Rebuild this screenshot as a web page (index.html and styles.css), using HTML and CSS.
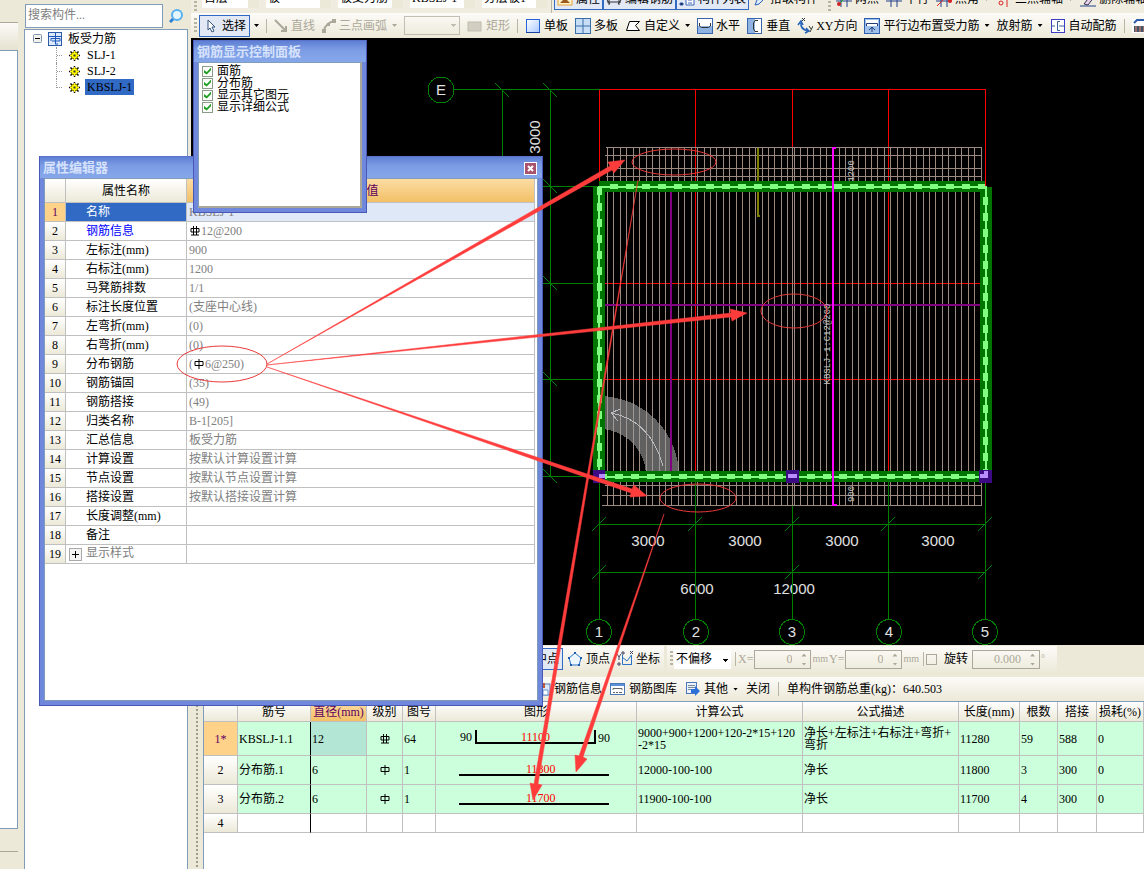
FILE: index.html
```html
<!DOCTYPE html>
<html lang="zh">
<head>
    <meta charset="UTF-8">
    <title>板受力筋</title>
    <meta name="viewport" content="width=device-width,initial-scale=1.0">
    <link rel="stylesheet" href="styles.css">
</head>
<body>
<svg class="symbols" width="0" height="0">
    <symbol id="grade1" viewBox="0 0 10 10">
        <path d="M5 0v10M1 2.5h8v4H1z" fill="none" stroke="#000"/>
    </symbol>
    <symbol id="grade3" viewBox="0 0 10 10">
        <path d="M3.5 0v9M6.5 0v9M1 2.5h8v3.5H1zM1 9h8" fill="none" stroke="#000"/>
    </symbol>
    <symbol id="gear" viewBox="0 0 11 11">
        <path d="M5.5 0v11M0 5.5h11M1.5 1.5l8 8M9.500 1.500l-8 8" stroke="#000" stroke-width="1.500"/>
        <circle cx="5.500" cy="5.500" r="3.500" fill="#ff0" stroke="#8a7a00"/>
        <path d="M5.5 1v9M1 5.500h9" stroke="#ff0"/>
        <rect x="4.500" y="4.500" width="2" height="2" fill="#333"/>
    </symbol>
    <symbol id="axis" viewBox="0 0 16 16">
        <path d="M0 4h16M0 10h16M5 0v16M11 0v16" stroke="#23408c" fill="none"/>
    </symbol>
</svg>
<div class="app">
    <aside class="side">
        <div class="side-head"></div>
        <div class="side-tab"></div>
        <div class="side-body"></div>
        <div class="side-foot"></div>
    </aside>
    <section class="tree-panel">
        <div class="search">
            <input type="text" class="search-input" placeholder="搜索构件..." aria-label="搜索构件">
            <button class="search-button" aria-label="搜索">
                <svg width="14" height="14" viewBox="0 0 14 14">
                    <path d="M5 9L1 13" stroke="#2f7fd0" stroke-width="3"/>
                    <circle cx="8" cy="6" r="5" fill="#e6f6ff" stroke="#58b0ee" stroke-width="2"/>
                </svg>
            </button>
        </div>
        <div class="tree">
            <div class="tree-root">
                <svg width="9" height="9" viewBox="0 0 9 9">
                    <rect x=".5" y=".5" width="8" height="8" rx="1" fill="#f3f2ea" stroke="#7b96b4"/>
                    <path d="M2 4.5h5" stroke="#000"/>
                </svg>
                <svg width="14" height="14" viewBox="0 0 14 14">
                    <rect x=".5" y=".5" width="13" height="13" fill="#dceafc" stroke="#2c5ba8"/>
                    <path d="M1 4.500h12M7.500 1v11M3 9V6.500h9V9H4M7 12h3" fill="none" stroke="#1d56b8"/>
                </svg>
                <span>板受力筋</span>
            </div>
            <ul class="tree-list">
                <li><svg width="11" height="11"><use href="#gear"/></svg><span>SLJ-1</span></li>
                <li><svg width="11" height="11"><use href="#gear"/></svg><span>SLJ-2</span></li>
                <li><svg width="11" height="11"><use href="#gear"/></svg><span class="selected">KBSLJ-1</span></li>
            </ul>
        </div>
    </section>
    <main class="main">
        <div class="bar bar-top">
            <i class="grip"></i>
            <select class="combo" aria-label="楼层"><option>首层</option></select>
            <select class="combo combo-wide" aria-label="类型"><option>板</option></select>
            <select class="combo combo-wide" aria-label="构件类型"><option>板受力筋</option></select>
            <select class="combo combo-wide" aria-label="构件"><option>KBSLJ-1</option></select>
            <select class="combo combo-wide" aria-label="分层"><option>分层板1</option></select>
            <i class="sep"></i>
            <div class="pressed-group">
                <button class="tool pressed">
                    <svg width="16" height="16"><rect x="1" y="1" width="14" height="13" fill="#fff3c8" stroke="#e8a23a"/><path d="M3 12l5-5 5 5z" fill="#9b5b20"/></svg>属性</button>
                <button class="tool pressed">
                    <svg width="16" height="16"><path d="M1 11h14M3 8v6M13 8v6M1 9l3 4M15 9l-3 4" stroke="#333"/></svg>编辑钢筋</button>
                <button class="tool pressed">
                    <svg width="16" height="16"><path d="M7 1h8v13H7z" fill="#fff" stroke="#3b64b8"/><path d="M9 6h4M9 9h4M9 12h4M1 8h3M1 12h3v2H1z" stroke="#3b64b8"/></svg>构件列表</button>
            </div>
            <button class="tool">
                <svg width="14" height="16"><path d="M2 14l2-5 7-7 3 3-8 8z" fill="#dcebff" stroke="#2c60c0"/></svg>拾取构件</button>
            <i class="grip"></i>
            <button class="tool"><svg width="16" height="16"><use href="#axis"/><path d="M2 14L13 3" stroke="#2b2"/><circle cx="3" cy="13" r="2" fill="#c22"/></svg>两点</button>
            <button class="tool"><svg width="16" height="16"><use href="#axis"/></svg>平行</button>
            <button class="tool"><svg width="16" height="16"><use href="#axis"/><path d="M1 15L14 2" stroke="#d22"/><circle cx="14" cy="10" r="2" fill="#d22"/></svg>点角<i class="arrow"></i></button>
            <button class="tool"><svg width="16" height="16"><path d="M11 0v16M5 0v9" stroke="#d22"/><circle cx="5" cy="12" r="2" fill="none" stroke="#d22"/></svg>三点辅轴<i class="arrow"></i></button>
            <button class="tool"><svg width="16" height="16"><path d="M0 15h16" stroke="#23408c"/><path d="M4 13l7-9 3 2-6 8z" fill="#e8d2ea" stroke="#335"/></svg>删除辅轴</button>
        </div>
        <div class="bar bar-draw">
            <i class="grip"></i>
            <button class="tool pressed select-tool">
                <svg width="12" height="16"><path d="M3 2v10l2-2 2 4 2-1-2-4h3z" fill="#fff" stroke="#33527c"/></svg>选择</button>
            <i class="arrow"></i>
            <i class="sep"></i>
            <button class="tool" disabled><svg width="14" height="16"><path d="M1 2l11 11M12 8v5H7" fill="none" stroke="#aca899" stroke-width="2"/></svg>直线</button>
            <button class="tool" disabled><svg width="14" height="16"><path d="M2 13C3 7 6 4 13 3" fill="none" stroke="#aca899" stroke-width="2"/><path d="M0 11h4v4H0zM5 5h3v3H5zM10 1h4v4h-4z" fill="#aca899"/></svg>三点画弧<i class="arrow"></i></button>
            <select class="combo-off" disabled aria-label="弧方向"></select>
            <button class="tool" disabled><svg width="16" height="16"><rect x="1" y="4" width="13" height="9" fill="#d2cfc2" stroke="#c0bdb0"/></svg>矩形</button>
            <i class="sep"></i>
            <button class="tool"><svg width="16" height="16"><defs><linearGradient id="slab" x2="1" y2="1"><stop stop-color="#fff"/><stop offset="1" stop-color="#a8c8ff"/></linearGradient></defs><rect x="1.500" y="1.500" width="13" height="13" fill="url(#slab)" stroke="#2a62d8"/><path d="M1 14.500h14" stroke="#1840a0"/></svg>单板</button>
            <button class="tool"><svg width="16" height="16"><rect x=".5" y=".5" width="15" height="15" fill="#c8def6" stroke="#3a6ea8"/><path d="M8 1v14M1 8h14" stroke="#3a6ea8"/></svg>多板</button>
            <button class="tool"><svg width="16" height="16"><path d="M4.500 3.500h10l-4 4 4 5H1.500z" fill="#fff" stroke="#000"/></svg>自定义<i class="arrow"></i></button>
            <button class="tool"><svg width="16" height="16"><rect x=".5" y=".5" width="15" height="15" fill="#8fb4e4" stroke="#3a66b0"/><rect x="1" y="1" width="14" height="7" fill="#fff"/><path d="M2.500 5v3l2 1.500h7l2-1.500V5" fill="none" stroke="#333"/></svg>水平</button>
            <button class="tool"><svg width="16" height="16"><rect x=".5" y=".5" width="14" height="15" fill="#8fb4e4" stroke="#3a66b0"/><rect x="8" y="1" width="6" height="14" fill="#fff"/><path d="M11 2.500H8L6.500 5v6L8 13.500h3" fill="none" stroke="#333"/></svg>垂直</button>
            <button class="tool"><svg width="16" height="16"><path d="M4 5q-1 6 7 8M1 7l3-4 2 4M9 10l3 3-4 2" fill="none" stroke="#2462b8" stroke-width="1.500"/><path d="M5 0l3 3M8 0L5 3M12 8l2 3M16 8l-3 6" stroke="#333"/></svg>XY方向</button>
            <button class="tool"><svg width="16" height="16"><rect x=".5" y=".5" width="15" height="15" fill="#9fc0ea" stroke="#2f5dae"/><rect x="2" y="2" width="12" height="6" fill="#fff"/><path d="M2.500 8V5.500h11V8M8 14V9M5 12l3-3 3 3" fill="none" stroke="#223c78"/></svg>平行边布置受力筋<i class="arrow"></i></button>
            <button class="tool">放射筋<i class="arrow"></i></button>
            <button class="tool"><svg width="16" height="16"><rect x="1.500" y="1.500" width="13" height="13" fill="#fff" stroke="#3c3cc8"/><path d="M10 3.500H7.500v9H10M1 8h4M9 8h5" fill="none" stroke="#3c60a0"/></svg>自动配筋</button>
            <i class="sep"></i>
            <button class="tool" aria-label="钢筋"><svg width="16" height="16"><rect y="1" width="16" height="14" fill="#fff"/><path d="M2 5l3-3h11" fill="none" stroke="#2f5dae" stroke-width="2"/><path d="M2 8h14v6H2z" fill="#456"/><path d="M4 8v6M8 8v6M12 8v6" stroke="#e87" /></svg></button>
        </div>
        <div class="canvas">
            <svg width="953" height="607" viewBox="191 38 953 607" shape-rendering="crispEdges">
                <!--轴线-->
                <g stroke="#f00" fill="none">
                    <path d="M599.5 89.500H985.500V186M599.500 90V186M695.500 90V476M792.500 90V148M888.500 90V476M600 283.500H985M600 379.500H985"/>
                </g>
                <g stroke="#008000" fill="none">
                    <path d="M454 89.500H600M502.500 90V476M550.500 90V476M502 186.500H600M502 283.500H600M502 379.500H600M502 476.500H600"/>
                    <path d="M495 83l14 14M543 83l14 14M543 179l14 14M543 276l14 14M543 372l14 14M543 469l14 14"/>
                    <path d="M599 524.500H985M599 572.500H985"/>
                    <path d="M592 531l14-14M688 531l14-14M785 531l14-14M881 531l14-14M978 531l14-14M592 579l14-14M785 579l14-14M978 579l14-14"/>
                </g>
                <!--负筋网-->
                <g stroke="#9c8a80" fill="none">
                    <path d="M607 326.500H982" stroke-width="359" stroke-dasharray="1 5.440"/>
                    <path d="M606 147.500H982M605 155.500H982M606 168.500H982M606 176.500H982M605 485.500H982M602 495.500H982M602 505.500H982M792.500 148V506"/>
                </g>
                <!--弧形坡道-->
                <path d="M599 396a80 80 0 0 1 80 80h-33a47 47 0 0 0-47-47z" fill="#a0a0a0" fill-opacity=".6"/>
                <path d="M611 413Q650 420 663 466M620 409l-9 4 7 8" fill="none" stroke="#b8bcc0"/>
                <!--受力筋-->
                <path d="M670.500 187V476M602 304.500H984" stroke="#800080" stroke-width="2" fill="none"/>
                <path d="M758 148V216h2" stroke="#808000" stroke-width="2" fill="none"/>
                <!--梁-->
                <path d="M599 186.500H985M599 476.500H985" stroke="#007400" stroke-width="11"/>
                <path d="M599 187V476M986 187V476" stroke="#007400" stroke-width="12"/>
                <path d="M599 187H985M599 477H985M599 186V476M986 186V476" stroke="#80ff80" stroke-width="2"/>
                <path d="M610 186.500H985M599 476.500H985" stroke="#80ff80" stroke-width="5" stroke-dasharray="8"/>
                <path d="M599.500 187V476M985.500 197V476" stroke="#80ff80" stroke-width="5" stroke-dasharray="8"/>
                <path d="M593 470h12v13h-12zM786 470h13v13h-13zM979 470h13v13h-13z" fill="#3c0a82"/>
                <path d="M599 476h6M788 476h9M980 476h6v-5" stroke="#b98cff" stroke-width="4" fill="none"/>
                <path d="M836 148h-3V505h4" stroke="#f0f" stroke-width="2" fill="none"/>
                <g stroke="#008000" fill="none">
                    <path d="M599.500 483V619M695.500 482V619M792.500 506V619M888.500 482V619M985.500 483V619"/>
                    <circle cx="441" cy="90" r="13"/>
                    <circle cx="599" cy="632" r="12.500"/><circle cx="696" cy="632" r="12.500"/>
                    <circle cx="792" cy="632" r="12.500"/><circle cx="889" cy="632" r="12.500"/>
                    <circle cx="985" cy="632" r="12.500"/>
                </g>
                <g class="dims">
                    <text x="441" y="95">E</text>
                    <text x="648" y="546">3000</text><text x="745" y="546">3000</text>
                    <text x="842" y="546">3000</text><text x="938" y="546">3000</text>
                    <text x="697" y="594">6000</text><text x="794" y="594">12000</text>
                    <text x="599" y="637">1</text><text x="696" y="637">2</text><text x="792" y="637">3</text>
                    <text x="889" y="637">4</text><text x="985" y="637">5</text>
                    <text transform="translate(540 137) rotate(-90)">3000</text>
                </g>
                <path d="M695.500 582V598M792.500 582V598" stroke="#008000"/>
                <g class="marks">
                    <text transform="translate(854 171) rotate(-90)">1200</text>
                    <text transform="translate(854 494) rotate(-90)">900</text>
                    <text transform="translate(830 344) rotate(-90)">KBSLJ-1:C12@200</text>
                </g>
            </svg>
        </div>
        <div class="bar bar-snap">
            <div class="strip snap-strip">
                <button class="tool pressed">中点</button>
                <button class="tool"><svg width="16" height="16"><path d="M8 2l6 5-2 7H4L2 7z" fill="#eef6ff" stroke="#2c74c8"/><path d="M7 1h2v2H7zM13 6h2v2h-2zM1 6h2v2H1zM3 13h2v2H3zM11 13h2v2h-2z" fill="#1c5cae"/></svg>顶点</button>
                <button class="tool"><svg width="16" height="16"><path d="M5.500 4v9.500H15M5 6l5 4 4.500-6v10" fill="none" stroke="#2c74c8"/><path d="M0 3l2 3 2-3M2 6v3M13 0l3 3M16 0l-3 3M1 12h2v2H1zM5 1h2v2H5z" fill="none" stroke="#446"/></svg>坐标</button>
            </div>
            <div class="strip offset-strip">
                <i class="grip"></i>
                <select class="offset-select" aria-label="偏移"><option>不偏移</option></select>
                <i class="sep"></i>
                <label for="off-x">X=</label>
                <span class="spin"><input type="text" id="off-x" value="0" disabled><i></i></span>
                <span class="unit">mm</span>
                <label for="off-y">Y=</label>
                <span class="spin"><input type="text" id="off-y" value="0" disabled><i></i></span>
                <span class="unit">mm</span>
                <i class="sep"></i>
                <input type="checkbox" class="rotate-check" id="rotate">
                <label for="rotate" class="rotate-label">旋转</label>
                <span class="spin spin-wide"><input type="text" value="0.000" aria-label="角度" disabled><i></i></span>
                <span class="unit">°</span>
            </div>
        </div>
        <div class="bar bar-info">
            <button class="tool"><svg width="16" height="16"><rect x="5" y="3" width="10" height="11" fill="#dce8fa" stroke="#4a78b8"/><path d="M3 2h7v5H3z" fill="#c05a3a"/><path d="M8 9h5v5H8z" fill="#fff" stroke="#6a96d0"/></svg>钢筋信息</button>
            <button class="tool"><svg width="16" height="16"><rect x=".5" y="2.500" width="14" height="11" fill="#fff" stroke="#4a78b8"/><path d="M1 3h13v2H1z" fill="#5a90d8"/><path d="M3 9V7.500h9V9M3 11.500h2M6 11.500h2M9 11.500h3" fill="none" stroke="#666"/></svg>钢筋图库</button>
            <button class="tool"><svg width="16" height="16"><rect x="1.500" y="1.500" width="10" height="11" fill="#eaf2fd" stroke="#4a78b8"/><path d="M3 4.500h7M3 6.500h7M3 8.500h4" stroke="#789"/><path d="M6 8h4V5l5 5-5 5v-3H6z" fill="#2a70d8"/></svg>其他<i class="arrow"></i></button>
            <button class="tool">关闭</button>
            <i class="sep"></i>
            <span>单构件钢筋总重(kg)：640.503</span>
        </div>
        <div class="result">
            <div class="splitter"></div>
            <div class="result-body">
                <table class="rebar">
                    <colgroup>
                        <col class="c-no"><col class="c-name"><col class="c-dia"><col class="c-grade"><col class="c-fig">
                        <col class="c-shape"><col class="c-formula"><col class="c-desc"><col class="c-len"><col class="c-count">
                        <col class="c-lap"><col>
                    </colgroup>
                    <thead>
                    <tr>
                        <th></th><th>筋号</th><th class="hot">直径(mm)</th><th>级别</th><th>图号</th><th>图形</th>
                        <th>计算公式</th><th>公式描述</th><th>长度(mm)</th><th>根数</th><th>搭接</th><th class="last">损耗(%)</th>
                    </tr>
                    </thead>
                    <tbody>
                    <tr class="row-tall">
                        <th class="current">1*</th><td class="name">KBSLJ-1.1</td><td class="active">12</td>
                        <td class="center"><svg width="10" height="10"><use href="#grade3"/></svg></td><td>64</td>
                        <td class="shape">
                            <svg width="200" height="33">
                                <path d="M40 8v13h119V8" fill="none" stroke="#000" stroke-width="2"/>
                                <text x="24" y="19">90</text><text x="162" y="20">90</text>
                                <text x="85" y="19" class="red">11100</text>
                            </svg>
                        </td>
                        <td>9000+900+1200+120-2*15+120<br>-2*15</td><td class="desc">净长+左标注+右标注+弯折+<br>弯折</td>
                        <td>11280</td><td>59</td><td>588</td><td>0</td>
                    </tr>
                    <tr class="row-mid">
                        <th>2</th><td class="name">分布筋.1</td><td>6</td>
                        <td class="center"><svg width="10" height="10"><use href="#grade1"/></svg></td><td>1</td>
                        <td class="shape">
                            <svg width="200" height="28">
                                <path d="M23 19h150" stroke="#000" stroke-width="2"/>
                                <text x="90" y="17" class="red">11800</text>
                            </svg>
                        </td>
                        <td>12000-100-100</td><td>净长</td><td>11800</td><td>3</td><td>300</td><td>0</td>
                    </tr>
                    <tr class="row-mid">
                        <th>3</th><td class="name">分布筋.2</td><td>6</td>
                        <td class="center"><svg width="10" height="10"><use href="#grade1"/></svg></td><td>1</td>
                        <td class="shape">
                            <svg width="200" height="28">
                                <path d="M23 19h150" stroke="#000" stroke-width="2"/>
                                <text x="90" y="17" class="red">11700</text>
                            </svg>
                        </td>
                        <td>11900-100-100</td><td>净长</td><td>11700</td><td>4</td><td>300</td><td>0</td>
                    </tr>
                    <tr class="row-empty">
                        <th>4</th><td class="name"></td><td></td><td></td><td></td><td></td><td></td><td></td><td></td><td></td><td></td><td></td>
                    </tr>
                    </tbody>
                </table>
            </div>
        </div>
    </main>
</div>

<!--属性编辑器-->
<div class="window window-props">
    <div class="window-title"><span>属性编辑器</span>
        <button class="window-close" aria-label="关闭">
            <svg width="13" height="13"><rect x=".5" y=".5" width="12" height="12" fill="#a8526c" stroke="#fff"/><path d="M4 4l5 5M9 4l-5 5" stroke="#fff" stroke-width="2"/></svg>
        </button>
    </div>
    <div class="window-body">
        <table class="props">
            <colgroup><col class="p-no"><col class="p-name"><col></colgroup>
            <thead>
            <tr><th></th><th>属性名称</th><th class="hot">属性值</th></tr>
            </thead>
            <tbody>
            <tr class="picked"><th>1</th><td>名称</td><td>KBSLJ-1</td></tr>
            <tr><th>2</th><td class="link">钢筋信息</td><td><svg width="10" height="10"><use href="#grade3"/></svg>12@200</td></tr>
            <tr><th>3</th><td>左标注(mm)</td><td>900</td></tr>
            <tr><th>4</th><td>右标注(mm)</td><td>1200</td></tr>
            <tr><th>5</th><td>马凳筋排数</td><td>1/1</td></tr>
            <tr><th>6</th><td>标注长度位置</td><td>(支座中心线)</td></tr>
            <tr><th>7</th><td>左弯折(mm)</td><td>(0)</td></tr>
            <tr><th>8</th><td>右弯折(mm)</td><td>(0)</td></tr>
            <tr><th>9</th><td>分布钢筋</td><td>(<svg width="10" height="10"><use href="#grade1"/></svg>6@250)</td></tr>
            <tr><th>10</th><td>钢筋锚固</td><td>(35)</td></tr>
            <tr><th>11</th><td>钢筋搭接</td><td>(49)</td></tr>
            <tr><th>12</th><td>归类名称</td><td>B-1[205]</td></tr>
            <tr><th>13</th><td>汇总信息</td><td>板受力筋</td></tr>
            <tr><th>14</th><td>计算设置</td><td>按默认计算设置计算</td></tr>
            <tr><th>15</th><td>节点设置</td><td>按默认节点设置计算</td></tr>
            <tr><th>16</th><td>搭接设置</td><td>按默认搭接设置计算</td></tr>
            <tr><th>17</th><td>长度调整(mm)</td><td></td></tr>
            <tr><th>18</th><td>备注</td><td></td></tr>
            <tr class="group"><th>19</th><td><button class="expand" aria-label="展开"><svg width="13" height="13"><rect x=".5" y=".5" width="12" height="12" fill="#f4f4f4" stroke="#aaa"/><path d="M3 6.500h7M6.500 3v7" stroke="#000"/></svg></button>显示样式</td><td></td></tr>
            </tbody>
        </table>
    </div>
</div>

<!--钢筋显示控制面板-->
<div class="window window-display">
    <div class="window-title"><span>钢筋显示控制面板</span></div>
    <div class="window-body display-list">
        <label><input type="checkbox" checked>面筋</label>
        <label><input type="checkbox" checked>分布筋</label>
        <label><input type="checkbox" checked>显示其它图元</label>
        <label><input type="checkbox" checked>显示详细公式</label>
    </div>
</div>

<!--标注箭头-->
<svg class="notes" width="1144" height="869">
    <g fill="none" stroke="#e83a3a">
        <ellipse cx="222" cy="364" rx="45" ry="18"/>
        <ellipse cx="674" cy="162" rx="42" ry="13"/>
        <ellipse cx="794" cy="311" rx="33" ry="17"/>
        <ellipse cx="698" cy="498" rx="38" ry="14"/>
    </g>
    <g fill="#ff3c3c" stroke="#ff3c3c" stroke-width=".5">
        <path d="M267 364L610 166 608 162 625 160 614 173 612 170z"/>
        <path d="M267 365L731 313 730 309 747 313 732 321 731 317z"/>
        <path d="M267 367L632 489 634 485 647 496 630 497 631 493z"/>
        <path d="M638 180L534 784 530 783 533 800 542 785 538 784z"/>
        <path d="M664 514L579 756 575 755 576 772 587 759 583 757z"/>
    </g>
</svg>
</body>
</html>
```
FILE: styles.css
```css
* {
    box-sizing: border-box;
}

html, body {
    height: 100%;
}

body {
    margin: 0;
    overflow: hidden;
    background: #ece9d8;
    color: #000;
    font: 12px/14px "Liberation Serif", "Noto Sans CJK SC", sans-serif;
}

button, input, select {
    font: inherit;
    color: inherit;
    margin: 0;
    padding: 0;
    border: 0;
    background: none;
    border-radius: 0;
    appearance: none;
}

svg {
    display: block;
    flex: none;
}

.symbols {
    position: absolute;
}

.app {
    display: flex;
    height: 100%;
}

/*最左侧边条*/
.side {
    width: 18px;
    margin-right: 6px;
    flex: none;
    display: flex;
    flex-direction: column;
}

.side-head {
    height: 23px;
    border-bottom: 1px solid #aca899;
}

.side-tab {
    height: 27px;
    background: linear-gradient(#fbfaf7, #e6e2d0);
}

.side-body {
    flex: 1;
    background: #fff;
    border: 1px solid #7f9db9;
    border-left: 0;
}

.side-foot {
    height: 40px;
    background: linear-gradient(#ece9d8 22px, #aca899 22px, #aca899 23px, #ece9d8 23px);
}

/*构件树*/
.tree-panel {
    width: 164px;
    margin-right: 3px;
    flex: none;
    display: flex;
    flex-direction: column;
}

.search {
    display: flex;
    height: 29px;
    padding: 4px 5px 1px 1px;
    gap: 6px;
    align-items: center;
}

.search-input {
    width: 138px;
    height: 24px;
    padding: 0 2px 2px;
    background: #fff;
    border: 1px solid #7f9db9;
}

.search-input::placeholder {
    color: #808080;
}

.tree {
    flex: 1;
    background: #fff;
    border: 1px solid #7f9db9;
    border-bottom: 0;
}

.tree-root {
    display: flex;
    align-items: center;
    gap: 6px;
    height: 17px;
    padding-left: 8px;
}

.tree-list {
    list-style: none;
    margin: 0 0 0 31px;
    padding: 0;
    width: 100px;
}

.tree-list li {
    display: flex;
    align-items: center;
    gap: 6px;
    height: 16px;
}

.tree-list li::before {
    content: "";
    width: 6px;
    height: 16px;
    border-left: 1px dotted #999;
    background: repeating-linear-gradient(90deg, #999 0 1px, #fff 1px 2px) 0 8px / 6px 1px no-repeat;
}

.tree-list li:last-child::before {
    height: 9px;
    align-self: flex-start;
}

.tree-list span {
    padding: 1px 2px;
    margin-left: -1px;
}

.tree-list .selected {
    background: #316ac5;
}

/*主区域*/
.main {
    flex: 1;
    min-width: 0;
    display: flex;
    flex-direction: column;
}

.bar {
    display: flex;
    align-items: center;
    flex: none;
    white-space: nowrap;
    overflow: hidden;
    background: linear-gradient(#fcfbf8, #ece9d8);
}

.grip {
    width: 3px;
    height: 16px;
    margin: 0 2px 0 3px;
    flex: none;
    background: repeating-linear-gradient(#b8b4a2 0 2px, transparent 2px 4px);
}

.sep {
    width: 1px;
    height: 14px;
    flex: none;
    background: #b8b5a4;
}

.tool {
    display: flex;
    align-items: center;
    flex: none;
    gap: 3px;
    height: 22px;
}

.tool:disabled {
    color: #aca899;
}

.pressed {
    padding: 0 3px;
    border: 1px solid #316ac5;
    background: #e2e9f5;
}

.arrow {
    width: 5px;
    height: 3px;
    flex: none;
    background: currentColor;
    clip-path: polygon(0 0, 100% 0, 50% 100%);
}

.tool .arrow {
    margin-left: 2px;
}

.bar-top {
    height: 13px;
    align-items: flex-end;
    gap: 7px;
    background: #f0ede0;
}

.bar-top > * {
    height: 24px;
}

.bar-top .tool {
    height: 22px;
    margin-bottom: 3px;
}

.bar-top .sep {
    margin: 0 -5px 0 -3px;
}

.bar-top .grip {
    margin: 0 -2px 0 3px;
}

.bar-top .pressed {
    padding: 0 2px;
}

.combo {
    width: 57px;
    height: 18px;
    margin-bottom: 5px;
    padding: 0 2px 2px;
    flex: none;
    background: linear-gradient(90deg, #fff 46px, #ece9d8 46px);
}

.combo-wide {
    width: 65px;
    background: linear-gradient(90deg, #fff 54px, #ece9d8 54px);
}

.pressed-group {
    display: flex;
    align-items: flex-end;
    margin-right: -3px;
}

.bar-draw {
    height: 25px;
    gap: 7px;
}

.bar-draw .grip {
    margin-right: -5px;
}

.select-tool {
    padding: 0 3px 0 5px;
    gap: 5px;
    margin-right: -3px;
}

.combo-off {
    width: 56px;
    height: 19px;
    flex: none;
    border: 1px solid #aca899;
    background: linear-gradient(#aca899, #aca899) 46px 7px / 5px 1px no-repeat, linear-gradient(#aca899, #aca899) 47px 8px / 3px 1px no-repeat, linear-gradient(#aca899, #aca899) 48px 9px / 1px 1px no-repeat;
}

/*绘图区*/
.canvas {
    flex: 1;
    min-height: 0;
    overflow: hidden;
    background: #000;
}

.dims text {
    font: 15px "Liberation Sans", sans-serif;
    fill: #e0e0e0;
    text-anchor: middle;
}

.marks text {
    font: 9px "Liberation Mono", monospace;
    fill: #c8c8c8;
    text-anchor: middle;
}

/*捕捉栏*/
.bar-snap {
    height: 30px;
    padding: 0 0 2px 325px;
    gap: 3px;
    background: #ece9d8;
}

.strip {
    display: flex;
    align-items: center;
    height: 27px;
    background: linear-gradient(#fcfbf8, #ece9d8);
}

.snap-strip {
    gap: 4px;
    padding-right: 4px;
}

.snap-strip .pressed {
    padding-left: 18px;
}

.snap-strip .tool + .tool + .tool {
    margin-left: 3px;
}

.offset-strip {
    gap: 1px;
    color: #aca899;
    padding-right: 4px;
}

.offset-strip .grip {
    margin-right: 0;
}

.offset-strip .sep {
    margin: 0 1px 0 3px;
}

.offset-select {
    width: 57px;
    height: 19px;
    padding: 0 2px;
    color: #000;
    background: linear-gradient(#000, #000) 49px 9px / 5px 1px no-repeat, linear-gradient(#000, #000) 50px 10px / 3px 1px no-repeat, linear-gradient(#000, #000) 51px 11px / 1px 1px no-repeat, #fff;
}

.spin {
    position: relative;
    width: 57px;
    height: 19px;
    border: 1px solid #aca899;
}

.spin-wide {
    width: 68px;
    margin-left: 3px;
}

.spin input {
    width: 100%;
    height: 17px;
    padding-right: 18px;
    text-align: right;
}

.spin i::before, .spin i::after {
    content: "";
    position: absolute;
    right: 4px;
    width: 5px;
    height: 3px;
    background: #aca899;
}

.spin i::before {
    top: 3px;
    clip-path: polygon(0 100%, 100% 100%, 50% 0);
}

.spin i::after {
    bottom: 2px;
    clip-path: polygon(0 0, 100% 0, 50% 100%);
}

.unit {
    min-width: 12px;
    font-size: 10px;
}

.rotate-check {
    width: 11px;
    height: 11px;
    border: 1px solid #aca899;
}

.rotate-label {
    color: #000;
    margin-left: 6px;
}

/*钢筋信息栏*/
.bar-info {
    height: 26px;
    padding-left: 344px;
    gap: 8px;
    border-top: 2px solid #ece9d8;
}

/*钢筋表*/
.result {
    display: flex;
    flex: none;
    min-height: 168px;
}

.splitter {
    width: 12px;
    flex: none;
    background: repeating-linear-gradient(#a09c8c 0 2px, transparent 2px 4px) 5px 0 / 2px 100% no-repeat, #ece9d8;
}

.result-body {
    flex: 1;
    min-width: 0;
    background: #fff;
    border-left: 1px solid #7f9db9;
    border-top: 1px solid #7f9db9;
}

table {
    border-spacing: 0;
    table-layout: fixed;
    width: 100%;
}

th, td {
    padding: 0;
    border-right: 1px solid #c0c0c0;
    border-bottom: 1px solid #c0c0c0;
    font-weight: normal;
    white-space: nowrap;
}

th {
    background: linear-gradient(#fff, #ece9d8);
}

.hot {
    color: #600060;
    background: linear-gradient(#fcdca4, #f2c066);
}

.rebar th {
    height: 20px;
}

.rebar td {
    padding: 0 1px;
    background: #ccffdb;
    line-height: 12px;
    white-space: normal;
}

.rebar td.desc {
    white-space: nowrap;
}

.rebar .row-tall td {
    height: 34px;
}

.rebar .row-mid td {
    height: 29px;
}

.rebar .row-empty td {
    height: 19px;
    background: #fff;
}

.rebar .row-empty th {
    height: 19px;
}

.rebar .name {
    border-right-color: #000;
}

.rebar .current {
    color: #600060;
    background: #ffd28a;
}

.rebar .active {
    background: #b4e6d6;
}

.rebar .shape {
    padding: 0;
}

.rebar .center svg {
    margin: 0 auto;
}

.rebar .last {
    text-align: left;
    padding-left: 2px;
}

.red {
    fill: #f00;
}

.c-no { width: 34px; }
.c-name { width: 73px; }
.c-dia { width: 56px; }
.c-grade { width: 36px; }
.c-fig { width: 33px; }
.c-shape { width: 201px; }
.c-formula { width: 166px; }
.c-desc { width: 156px; }
.c-len { width: 61px; }
.c-count { width: 38px; }
.c-lap { width: 39px; }

/*浮动窗口*/
.window {
    position: absolute;
    display: flex;
    flex-direction: column;
    padding: 0 4px 4px;
    background: #7088dc;
    border: 1px solid #4858b8;
    border-top-color: #5a72cc;
}

.window-title {
    display: flex;
    align-items: center;
    justify-content: space-between;
    height: 21px;
    margin: 0 -4px;
    padding: 1px 5px 0 3px;
    flex: none;
    color: #d6e2fb;
    font-size: 13px;
    font-weight: bold;
    background: linear-gradient(#5f7fd4, #7b9be4 40%, #86a8ea);
}

.window-body {
    flex: 1;
    background: #fff;
    border: 1px solid #7f9db9;
}

.window-props {
    left: 39px;
    top: 156px;
    width: 504px;
    height: 550px;
}

.window-props .window-body {
    padding-right: 2px;
}

.window-display {
    left: 193px;
    top: 40px;
    width: 174px;
    height: 173px;
}

.props th, .props td {
    height: 19px;
}

.props thead th {
    height: 24px;
}

.props td:nth-child(2) {
    padding-left: 20px;
}

.props td:nth-child(3) {
    padding-left: 2px;
    color: #808080;
}

.props td svg {
    display: inline-block;
    vertical-align: -1px;
    margin: 0 1px;
}

.props td.link {
    color: #00f;
}

.props .picked th {
    color: #600060;
    background: #ffd28a;
}

.props .picked td:nth-child(2) {
    color: #fff;
    background: #316ac5;
}

.props .picked td:nth-child(3) {
    background: #dfe8f6;
}

.props .group td:nth-child(2) {
    padding-left: 2px;
    color: #808080;
}

.expand {
    margin-right: 3px;
    vertical-align: middle;
}

.props .expand svg {
    vertical-align: top;
}

.p-no { width: 21px; }
.p-name { width: 121px; }

.display-list {
    display: flex;
    flex-direction: column;
    padding: 2px 3px;
    border-right: 2px solid #aca899;
    border-bottom: 2px solid #aca899;
}

.display-list label {
    display: flex;
    align-items: center;
    gap: 4px;
    height: 12px;
}

.display-list input {
    width: 11px;
    height: 11px;
    border: 1px solid #8c9a88;
    background: #fff;
}

.display-list input:checked::before {
    content: "";
    display: block;
    width: 7px;
    height: 7px;
    margin: 1px;
    background: #21a121;
    clip-path: polygon(0 35%, 40% 65%, 100% 0, 100% 40%, 40% 100%, 0 75%);
}

.notes {
    position: absolute;
    left: 0;
    top: 0;
    pointer-events: none;
}
```
